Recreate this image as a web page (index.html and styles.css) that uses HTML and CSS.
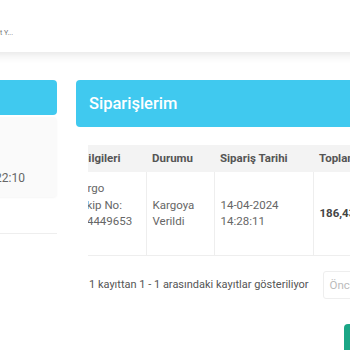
FILE: index.html
```html
<!DOCTYPE html>
<html>
	<head>
		<title>Siparişlerim</title>
		<meta charset="UTF-8">
		<meta name="viewport" content="width=device-width, initial-scale=1.0">
		<link rel="stylesheet" href="styles.css">
	</head>
	<body>
		<div class="page">
			<!-- üst bar -->
			<div class="topbar">
				<div class="user">Hoş geldiniz, Ahmet Y...</div>
			</div>

			<div class="content">
				<!-- sol menü -->
				<div class="side">
					<div class="side-head"></div>
					<div class="side-card">
						<span>Son giriş: 13-04-2024 22:10</span>
					</div>
					<div class="side-line"></div>
				</div>

				<!-- siparişler -->
				<div class="main">
					<div class="main-head">Siparişlerim</div>

					<div class="table-wrap">
						<table class="orders">
							<thead>
								<tr>
									<th class="col-kargo">Bilgileri</th>
									<th class="col-durum">Durumu</th>
									<th class="col-tarih">Sipariş Tarihi</th>
									<th class="col-toplam">Toplam Tutar</th>
								</tr>
							</thead>
							<tbody>
								<tr>
									<td class="col-kargo">Kargo<br>Takip No:<br>324449653</td>
									<td>Kargoya<br>Verildi</td>
									<td>14-04-2024<br>14:28:11</td>
									<td class="price">186,43 TL</td>
								</tr>
							</tbody>
						</table>
					</div>

					<div class="info-row">
						<span class="info">1 kayıttan 1 - 1 arasındaki kayıtlar gösteriliyor</span>
						<button class="page-btn">Önceki</button>
					</div>

					<div class="actions">
						<button class="green-btn">Yeni Sipariş</button>
					</div>
				</div>
			</div>
		</div>
	</body>
</html>
```

FILE: styles.css
```css
* {
	margin: 0;
	padding: 0;
	box-sizing: border-box;
}

body {
	width: 350px;
	height: 350px;
	overflow: hidden;
	background-color: #fff;
	font-family: Roboto, "Liberation Sans", sans-serif;
	color: #555;
}

/* sayfa sola kaydırılmış halde */
.page {
	margin-left: -200px;
	width: 1000px;
}

/* üst bar */
.topbar {
	height: 52px;
	background-color: #fff;
	box-shadow: 0 3px 9px rgba(0, 0, 0, 0.1);
	padding-top: 28px;
	position: relative;
	z-index: 1;
}

.user {
	width: 213px;
	text-align: right;
	font-size: 7px;
	line-height: 10px;
	color: #777;
	white-space: nowrap;
	overflow: hidden;
}

.content {
	display: flex;
	gap: 19px;
	padding-top: 28px;
}

/* sol menü */
.side {
	width: 257px;
	flex: none;
}

.side-head {
	height: 35px;
	background-color: #40c9ef;
	border-radius: 4px;
}

.side-card {
	margin-top: 2px;
	height: 80px;
	background-color: #fafafa;
	border-radius: 4px;
	box-shadow: 0 1px 2px rgba(0, 0, 0, 0.04);
	display: flex;
	align-items: flex-end;
	justify-content: flex-end;
	padding: 0 32px 11px 0;
	font-size: 12px;
	line-height: 16px;
	color: #666;
}

.side-line {
	margin-top: 36px;
	border-top: 1px solid #eee;
}

/* siparişler */
.main {
	width: 700px;
	flex: none;
}

.main-head {
	height: 47px;
	background-color: #40c9ef;
	border-radius: 4px;
	padding-left: 13px;
	display: flex;
	align-items: center;
	font-size: 16.5px;
	font-weight: 500;
	color: #fff;
}

.table-wrap {
	margin: 18px 0 0 12px;
	overflow: hidden;
}

.orders {
	margin-left: -19px;
	border-collapse: collapse;
	font-size: 11.5px;
	line-height: 16.5px;
}

.orders th {
	height: 27px;
	background-color: #f3f3f3;
	text-align: left;
	font-weight: 700;
	color: #555;
	padding: 0 6px;
	white-space: nowrap;
}

.orders td {
	height: 83px;
	padding: 0 6px;
	color: #666;
	vertical-align: middle;
	border-left: 1px solid #eee;
	border-bottom: 1px solid #eee;
}

.orders td:first-child {
	border-left: none;
}

.orders th.col-kargo {
	padding-left: 12px;
}

.orders td.col-kargo {
	vertical-align: top;
	padding-top: 8px;
	padding-left: 5px;
}

.col-kargo {
	width: 77px;
}

.col-durum {
	width: 68px;
}

.col-tarih {
	width: 99px;
}

.col-toplam {
	width: 120px;
}

.orders td.price {
	font-weight: 700;
	color: #444;
}

.info-row {
	display: flex;
	align-items: center;
	gap: 14px;
	margin-top: 15px;
	padding-left: 13px;
}

.info {
	font-size: 11px;
	color: #555;
}

.page-btn {
	height: 28px;
	padding: 0 6px;
	border: 1px solid #eee;
	border-radius: 3px;
	background-color: #fff;
	font-family: Roboto, "Liberation Sans", sans-serif;
	font-size: 11.5px;
	color: #bbb;
}

.actions {
	margin: 25px 0 0 268px;
}

.green-btn {
	height: 34px;
	padding: 0 14px;
	border: none;
	border-radius: 4px;
	background-color: #1ba686;
	color: #fff;
	font-family: Roboto, "Liberation Sans", sans-serif;
	font-size: 12px;
}
```
